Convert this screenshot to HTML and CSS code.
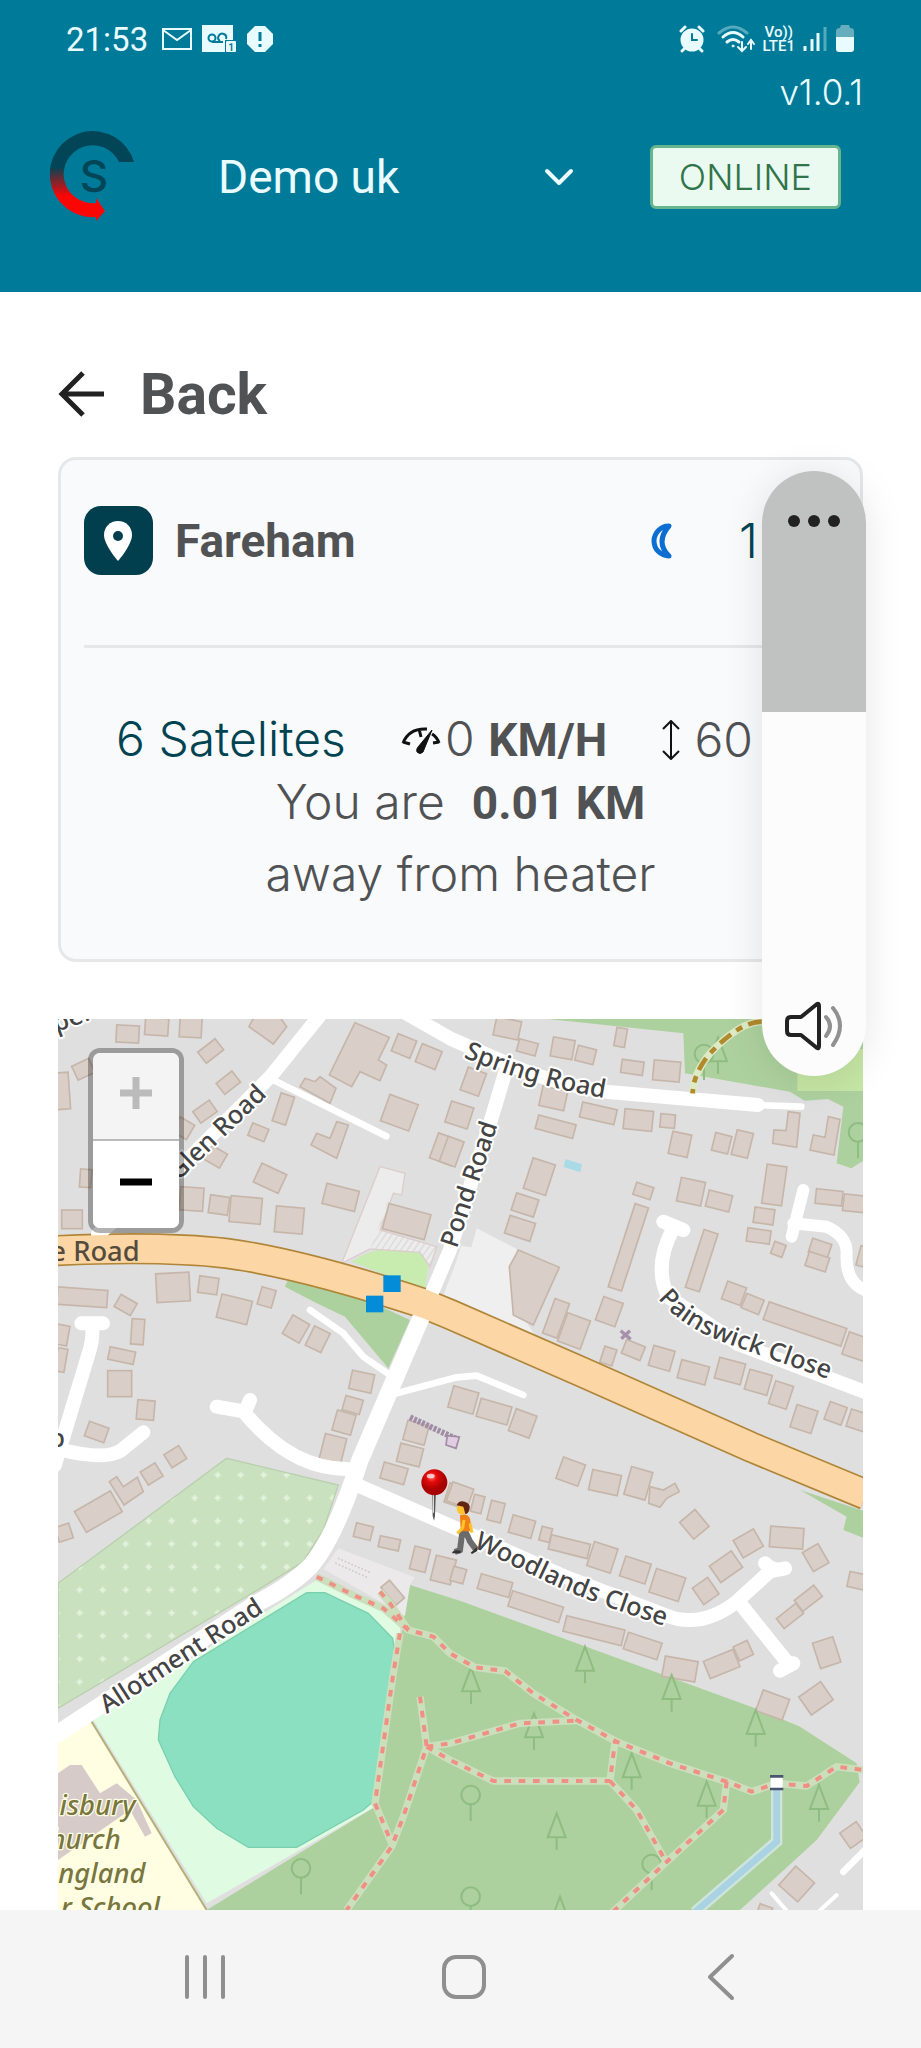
FILE: index.html
```html
<!DOCTYPE html>
<html lang="en">
<head>
    <meta charset="UTF-8">
    <meta name="viewport" content="width=device-width, initial-scale=1.0">
    <title>Heater location</title>
    <link rel="stylesheet" href="styles.css">
</head>
<body>
    <header class="header">
        <div class="status-bar">
            <div class="status-left">
                <span class="clock">21:53</span>
                <svg width="30" height="22" viewBox="0 0 30 22" fill="none" stroke="#e8fbff" stroke-width="2"><rect x="1" y="1" width="28" height="20"/><path d="M1 2l14 10L29 2"/></svg>
                <svg width="34" height="28" viewBox="0 0 34 28">
                    <path d="M0 0h31v15h-8v12H0z" fill="#e8fbff"/>
                    <g fill="none" stroke="#007a99" stroke-width="2"><circle cx="10" cy="13" r="3.5"/><path d="M10 17h11M18 16a4 4 0 1 1 6-2"/></g>
                    <rect x="24" y="16" width="10" height="11" rx="1" fill="#e8fbff"/>
                    <text x="29" y="26" text-anchor="middle" class="badge-text">1</text>
                </svg>
                <svg width="28" height="28" viewBox="0 0 28 28"><path d="M9 1h10l8 8v10l-8 8H9l-8-8V9z" fill="#e8fbff"/><path d="M14 7v9M14 19v3" stroke="#007a99" stroke-width="3"/></svg>
            </div>
            <div class="status-right">
                <svg width="26" height="28" viewBox="0 0 26 28" fill="none" stroke="#e8fbff" stroke-width="3" stroke-linecap="round"><circle cx="13" cy="15" r="10" fill="#e8fbff"/><path d="M2 6l4-4M24 6l-4-4M5 24l-2 2M21 24l2 2"/><path d="M13 9v6h5" stroke="#007a99" stroke-width="2"/></svg>
                <svg class="wifi" width="38" height="28" viewBox="0 0 38 28" fill="none" stroke="#e8fbff" stroke-width="3" stroke-linecap="round"><path d="M2 8q14-12 28 0" stroke="#55aabd"/><path d="M6 12q10-9 20 0M10 17q6-5 12 0"/><circle cx="16" cy="21" r="1" fill="#e8fbff" stroke-width="1"/><path d="M25 17v8m-4-3l4 4 4-4M34 24v-8m-3 3l3-4 3 4" stroke-width="2"/></svg>
                <span class="volte">Vo))<br>LTE1</span>
                <svg width="24" height="28" viewBox="0 0 24 28" stroke="#e8fbff" stroke-width="3"><path d="M2 21v5M9 14v12M15 8v18"/><path d="M22 2v24" stroke="#55aabd"/></svg>
                <svg class="battery" width="20" height="28" viewBox="0 0 20 28"><path d="M1 6q0-3 4-3l1-3h8l1 3q4 0 4 3v7H1z" fill="#66adbd"/><path d="M1 12h18v12q0 3-3 3H4q-3 0-3-3z" fill="#e8fbff"/></svg>
            </div>
        </div>
        <div class="version">v1.0.1</div>
        <div class="toolbar">
            <svg class="logo" width="84" height="92" viewBox="0 0 84 92">
                <defs><linearGradient id="ring" x1="0" y1="0" x2="0" y2="1"><stop offset=".4" stop-color="#014556"/><stop offset=".72" stop-color="#fb0505"/></linearGradient></defs>
                <path d="M84 31H69A29 29 0 1 0 46 72v-5l9 13-9 10v-4A43 43 0 1 1 84 31z" fill="url(#ring)"/>
                <text x="44" y="61" text-anchor="middle" class="logo-text">S</text>
            </svg>
            <div class="device-picker">
                <select class="device-select" aria-label="Device">
                    <option>Demo uk</option>
                </select>
                <svg class="chevron" width="30" height="20" viewBox="0 0 30 20" fill="none" stroke="#eafcff" stroke-width="4" stroke-linecap="round" stroke-linejoin="round"><path d="M3 4l12 12L27 4"/></svg>
            </div>
            <span class="online-badge">ONLINE</span>
        </div>
    </header>

    <main class="content">
        <a class="back-link" href="#">
            <svg width="46" height="46" viewBox="0 0 46 46" fill="none" stroke="#212121" stroke-width="5"><path d="M46 23H4M25 2L4 23l21 21"/></svg>
            Back
        </a>

        <section class="card">
            <div class="card-header">
                <svg class="place-icon" width="69" height="69" viewBox="0 0 69 69"><rect width="69" height="69" rx="17" fill="#013f4e"/><path d="M34 15c-8 0-14 6-14 14 0 10 14 26 14 26s14-16 14-26c0-8-6-14-14-14z" fill="#fff"/><circle cx="34" cy="30" r="5" fill="#013f4e"/></svg>
                <h2 class="place-name">Fareham</h2>
                <svg class="moon" width="32" height="38" viewBox="0 0 32 38" fill="none" stroke="#0d6ed1" stroke-width="5" stroke-linejoin="round"><path d="M28 4A15 15 0 1 0 28 34Q14 20 28 4z"/></svg>
                <span class="teal">1</span>
            </div>
            <div class="stats">
                <span class="teal">6 Satelites</span>
                <span class="speed">
                    <svg width="40" height="28" viewBox="0 0 40 28" fill="none" stroke="#111" stroke-width="3"><path d="M2 17Q8 2 26 3M2 16l7 2M18 3l2 8M31 8q5 3 7 9M38 16l-6 1"/><path d="M31 4L22 26q-3 3-6 0-1-3 1-5z" fill="#111" stroke-width="1"/></svg>
                    <span>0 <b>KM/H</b></span>
                </span>
                <span class="altitude">
                    <svg width="18" height="40" viewBox="0 0 18 40" fill="none" stroke="#111" stroke-width="2"><path d="M9 2v36M1 9l8-8 8 8M1 31l8 8 8-8"/></svg>
                    <span>60</span>
                </span>
            </div>
            <p class="distance">You are &nbsp;<b>0.01 KM</b></p>
            <p class="distance-note">away from heater</p>
        </section>

        <section class="map" aria-label="Map">
            <svg class="map-canvas" viewBox="0 0 2415 2673">
                <defs>
                    <pattern id="plots" x="445" y="1334" width="69" height="69" patternUnits="userSpaceOnUse"><path d="M34 25v18M25 34h18" stroke="#e4f5df" stroke-width="6"/></pattern>
                    <pattern id="bays" width="16" height="16" patternUnits="userSpaceOnUse" patternTransform="rotate(-55)"><path d="M0 8h16" stroke="#d6d1d0" stroke-width="3"/></pattern>
                    <radialGradient id="pinHead" cx=".4" cy=".3"><stop offset="0" stop-color="#ff6a6a"/><stop offset=".4" stop-color="#e30b0b"/><stop offset="1" stop-color="#a80000"/></radialGradient>
                    <g id="conifer" class="tree"><path d="M0 0l-27 72h54zM0 72v38"/></g>
                    <g id="broadleaf" class="tree"><circle r="28"/><path d="M0 28v50"/></g>
                    <path id="lineGlen" d="M361 487L690 170"/>
                    <path id="linePond" d="M1196 690L1335 270"/>
                    <path id="lineSpring" d="M1216 115Q1420 205 1690 245"/>
                    <path id="linePainswick" d="M1800 838Q1870 925 2010 975L2400 1112"/>
                    <path id="lineWoodlands" d="M1246 1584L1500 1705Q1640 1765 1880 1840"/>
                    <path id="lineAllotment" d="M146 2085L660 1752"/>
                </defs>

                <rect width="2415" height="2673" fill="#dfdfdf"/>

                <!-- land use -->
                <g class="wood">
                    <path d="M1470 0L1876 43 1881 163 2196 218 2240 245 2310 240 2356 263 2336 433 2380 448 2424 420V0z"/>
                    <path d="M681 803L691 781 796 795 926 843 1056 903 991 1048 861 893 776 853z"/>
                    <path d="M1056 1698L1206 1745 2106 2073 2226 2123 2396 2233 2405 2290 2276 2463 2046 2673H446L951 2363 1040 1780z"/>
                    <path d="M2226 1413L2366 1493 2356 1533 2424 1560V1478z"/>
                </g>
                <rect x="2218" y="90" width="200" height="126" fill="#c5e6a4"/>
                <path d="M881 728Q940 688 1016 688 1100 690 1111 743L1101 813z" fill="#c8ebb0"/>
                <path d="M0 1693L506 1318 841 1398 796 1533 736 1628 616 1703 0 2068z" fill="#c9e1bf"/>
                <path d="M0 1693L506 1318 841 1398 796 1533 736 1628 616 1703 0 2068z" fill="url(#plots)" stroke="#b9cfae" stroke-width="4"/>
                <path d="M106 2103L776 1683 1026 1793V1863L951 2363 446 2653z" fill="#dffce2"/>
                <path d="M746 1721H801L931 1783 1004 1858 1011 1903 951 2343 916 2373 716 2485H571L476 2428 406 2363 351 2273 301 2163 306 2103 336 2023 406 1928z" fill="#8ae0c0" stroke="#7acfae" stroke-width="4"/>
                <path d="M0 2163L101 2108 446 2673H0z" fill="#fffee2"/>
                <path d="M101 2108L446 2673" stroke="#b4b07a" stroke-width="6"/>
                <path d="M0 2263L36 2238H71L126 2323 176 2293 236 2343 281 2443 261 2453 216 2373 0 2523z" fill="#d6cbc8"/>
                <path d="M1256 628L1376 690 1366 853 1431 948 1150 845 1190 740 1210 680 1240 685z" fill="#efefef"/>
                <path d="M841 1588L1070 1675 1056 1698 1041 1790 796 1650z" fill="#ebe9e9"/>
                <path d="M840 1618L940 1662M832 1632L930 1676" stroke="#cfcaca" stroke-width="5" stroke-dasharray="5 6"/>
                <path d="M966 443L1041 463 1031 528 1006 523 966 633 1136 683 1116 743 1086 700 936 690 851 733z" fill="#ececec" stroke="#dccdcd" stroke-width="4"/>
                <path d="M1006 503L966 633 1136 683 1116 743 1086 700 936 690z" fill="url(#bays)"/>
                <path d="M1522 420l50 16-5 24-50-16z" fill="#a9dbe6"/>

                <g id="buildings" class="buildings"></g>

                <path class="main-casing" d="M-5 695Q306 680 506 703 730 733 1096 853L1176 886 1576 1061 2076 1283 2424 1427"/>

                <!-- residential roads -->
                <g class="road">
                    <path d="M785 -10L640 170 361 450 120 645"/>
                    <path class="narrow" d="M640 180L985 352"/>
                    <path d="M1030 -25L1180 60 1340 130Q1480 195 1660 220L2100 258"/>
                    <path class="narrow" d="M2090 258L2230 263"/>
                    <path d="M1341 163L1296 313 1176 693 1121 823"/>
                    <path d="M1096 880L906 1323Q830 1560 756 1643 700 1700 596 1753L0 2143" stroke-width="52"/>
                    <path d="M70 913H135M100 913Q110 950 90 1010L-10 1340"/>
                    <path d="M0 1290Q160 1330 200 1285L256 1240"/>
                    <path d="M476 1163L561 1178 576 1143M561 1183Q700 1350 866 1350"/>
                    <path class="narrow" d="M756 873L856 943 916 1013 996 1068"/>
                    <path class="narrow" d="M1016 1123L1196 1075 1256 1070 1396 1128"/>
                    <path d="M886 1393L1176 1520 1526 1675 1826 1790Q1930 1830 2036 1748L2146 1648M2121 1633L2146 1655 2181 1648M2046 1753L2186 1928M2206 1933L2166 1955"/>
                    <path d="M1816 608L1876 633M1846 628Q1785 740 1830 833L2040 975 2424 1120"/>
                    <path d="M2236 513L2201 653M2206 613L2306 623Q2366 650 2366 700 2360 790 2424 815" stroke-width="36"/>
                    <path class="narrow" d="M2356 2558L2424 2490"/>
                    <path class="service" d="M2141 2623L2190 2680M2336 2628L2280 2680"/>
                </g>

                <path class="main-road" d="M-5 695Q306 680 506 703 730 733 1096 853L1176 886 1576 1061 2076 1283 2424 1427"/>
                <g fill="#058cd8"><rect x="976" y="769" width="52" height="50"/><rect x="924" y="830" width="52" height="50"/></g>
                <path d="M1056 1195L1200 1262" stroke="#a08ca5" stroke-width="18" stroke-dasharray="9 4"/>
                <path d="M1168 1250l36 4-10 34-30-10z" fill="#e2cce4" stroke="#a08ca5" stroke-width="5"/>
                <path d="M1688 935l30 26M1716 935l-26 24" stroke="#a690ac" stroke-width="10"/>

                <!-- trees -->
                <use href="#conifer" x="1581" y="1883"/>
                <use href="#conifer" x="1239" y="1945"/>
                <use href="#conifer" x="1841" y="1968"/>
                <use href="#conifer" x="2093" y="2073"/>
                <use href="#conifer" x="1428" y="2083"/>
                <use href="#conifer" x="1721" y="2203"/>
                <use href="#conifer" x="1946" y="2288"/>
                <use href="#conifer" x="2283" y="2298"/>
                <use href="#conifer" x="1496" y="2383"/>
                <use href="#conifer" x="1506" y="2633"/>
                <use href="#conifer" x="1980" y="55"/>
                <use href="#broadleaf" x="1238" y="2328"/>
                <use href="#broadleaf" x="1781" y="2535"/>
                <use href="#broadleaf" x="1238" y="2633"/>
                <use href="#broadleaf" x="729" y="2548"/>
                <use href="#broadleaf" x="1938" y="105"/>
                <use href="#broadleaf" x="2400" y="340"/>

                <!-- water and footpaths -->
                <path d="M2156 2303V2468L1910 2680" fill="none" stroke="#cfe5dc" stroke-width="34"/>
                <path d="M2156 2303V2468L1910 2680" fill="none" stroke="#a9d2e2" stroke-width="20"/>
                <g id="paths" class="footpaths-base"></g>
                <g class="footpaths">
                    <path d="M776 1673L886 1728 976 1768 1051 1833 1126 1853 1176 1903 1251 1945 1341 1956 1426 2023 1556 2103 1676 2168 1836 2233 2006 2288 2081 2318 2156 2293 2246 2301 2336 2243 2418 2253"/>
                    <path d="M966 1718L996 1753 1051 1833"/>
                    <path d="M1026 1843L1006 1963 951 2353 1001 2473"/>
                    <path d="M1086 2033L1106 2183 1036 2393 1001 2483 866 2673"/>
                    <path d="M1106 2183L1176 2173 1386 2113 1556 2105"/>
                    <path d="M1106 2183L1176 2223 1306 2286H1656L1671 2168"/>
                    <path d="M1656 2286L1736 2373 1821 2523"/>
                    <path d="M2006 2288L1996 2373 1821 2533 1660 2683"/>
                </g>
                <path d="M2111 8Q2046 8 1956 103 1906 163 1904 223" fill="none" stroke="#dcebc5" stroke-width="22"/>
                <path d="M2111 8Q2046 8 1956 103 1906 163 1904 223" fill="none" stroke="#b08a2c" stroke-width="14" stroke-dasharray="42 20 20 20"/>
                <path d="M2138 2272h36v36h-36z" fill="#fff"/><path d="M2136 2272h40M2136 2310h40" stroke="#4b5570" stroke-width="8"/>

                <!-- labels -->
                <g class="labels">
                    <text><textPath href="#lineGlen">Glen Road</textPath></text>
                    <text><textPath href="#linePond">Pond Road</textPath></text>
                    <text><textPath href="#lineSpring">Spring Road</textPath></text>
                    <text><textPath href="#linePainswick">Painswick Close</textPath></text>
                    <text><textPath href="#lineWoodlands">Woodlands Close</textPath></text>
                    <text><textPath href="#lineAllotment">Allotment Road</textPath></text>
                    <text x="-5" y="40" transform="rotate(-20 -5 40)">per</text>
                    <text x="-26" y="1285">p</text>
                </g>
                <text class="main-label" x="-23" y="725">e Road</text>
                <g class="school-label">
                    <text x="232" y="2388">isbury</text>
                    <text x="188" y="2490">hurch</text>
                    <text x="262" y="2593">ngland</text>
                    <text x="306" y="2695">r School</text>
                </g>

                <!-- heater pin -->
                <g transform="translate(1128 1351)">
                    <path d="M-7 30h14L3 140 0 154-4 140z" fill="#555"/><path d="M-2 30v100" stroke="#ddd" stroke-width="4"/>
                    <circle cx="1" cy="39" r="39" fill="url(#pinHead)"/>
                    <ellipse cx="-10" cy="20" rx="12" ry="7" fill="#fff" opacity=".7"/>
                </g>
                <!-- walking user -->
                <g transform="translate(1176 1443)">
                    <path d="M38 88L30 150 14 156M44 90L60 124 78 148" fill="none" stroke="#6b6b6b" stroke-width="18"/>
                    <path d="M6 160q2-12 26-8v8zM62 158l18-16q6 6 0 12l-14 8z" fill="#333"/>
                    <path d="M30 46q22-8 30 10l6 38H32z" fill="#f08013"/>
                    <path d="M42 60L38 84 22 100M60 70l6 28" fill="none" stroke="#ffc231" stroke-width="9"/>
                    <path d="M24 16h26v24q-16 8-26-2l-4-12z" fill="#ffc231"/>
                    <path d="M20 16Q26 0 44 5 64 10 58 30 54 42 46 42L40 20z" fill="#612411"/>
                </g>
            </svg>
            <div class="zoom-control">
                <button class="zoom-btn" type="button" aria-label="Zoom in" disabled><svg width="32" height="32" viewBox="0 0 32 32"><path d="M0 16h32M16 0v32" stroke="#bbb" stroke-width="7"/></svg></button>
                <button class="zoom-btn" type="button" aria-label="Zoom out"><svg width="32" height="32" viewBox="0 0 32 32"><path d="M0 16h32" stroke="#000" stroke-width="7"/></svg></button>
            </div>
        </section>
    </main>

    <aside class="volume" aria-label="Volume">
        <button class="volume-level" type="button" aria-label="Volume options"><svg width="52" height="12" viewBox="0 0 52 12" fill="#222"><circle cx="6" cy="6" r="6"/><circle cx="26" cy="6" r="6"/><circle cx="46" cy="6" r="6"/></svg></button>
        <svg class="speaker" width="60" height="50" viewBox="0 0 60 50" fill="none" stroke="#222" stroke-width="4" stroke-linejoin="round" stroke-linecap="round"><path d="M3 20q0-4 4-4h10L33 3q2-1 2 2v40q0 3-2 2L17 34H7q-4 0-4-4z"/><path d="M42 16q8 9 0 19M49 7q14 17 0 37" stroke="#919191"/></svg>
    </aside>

    <nav class="nav-bar">
        <button class="nav-btn" type="button" aria-label="Recent apps"><svg width="46" height="48" viewBox="0 0 46 48"><path d="M5 4v40M23 4v40M41 4v40"/></svg></button>
        <button class="nav-btn" type="button" aria-label="Home"><svg width="46" height="48" viewBox="0 0 46 48"><rect x="3" y="4" width="40" height="40" rx="12"/></svg></button>
        <button class="nav-btn" type="button" aria-label="Back"><svg width="46" height="48" viewBox="0 0 46 48"><path d="M33 3L11 24l22 21"/></svg></button>
    </nav>
    <script src="map.js"></script>
</body>
</html>
```
FILE: map.js
```js
// each tile: offset, boxes as [centre x, centre y, width, height, angle], and odd shapes as point lists
const tiles = [
    {
        x: -24, y: -27,
        boxes: [
            [233,72,68,52,3],[320,50,70,52,4],[422,52,66,60,3],[482,123,66,42,-38],[535,218,60,42,-38],[100,178,56,46,-25],
            [38,243,40,110,-4],[465,305,60,42,-35],[625,367,52,40,22],[400,355,50,50,30],[497,440,54,48,30],[660,505,82,62,25],
            [700,297,42,88,18],[872,562,100,62,14],[425,567,70,70,4],[507,585,58,54,8],[587,600,94,78,5],[718,630,84,78,5],
            [107,505,34,54,4],[66,628,62,56,0],[1062,108,60,56,22],[1136,140,64,58,22],[1048,308,90,84,20],[1185,418,70,80,20],
            [1070,635,130,78,15],[97,862,150,52,4],[369,832,100,86,-3],[475,826,58,50,8],[553,898,94,72,14],[650,862,44,54,16],
            [227,885,56,42,30],[263,965,38,76,4],[215,1037,78,38,12],[209,1121,72,78,0],[287,1200,52,58,5],[140,1266,62,46,20],
            [738,957,58,64,30],[803,988,52,64,26],[935,1115,68,56,12],[908,1185,54,44,16],[882,1238,58,62,16],[848,1320,66,86,14],
            [1098,1268,66,60,15],[35,975,40,60,10],[33,1050,30,70,10]
        ],
        shapes: [
            '915,38 1018,82 985,150 1010,165 990,212 930,185 905,230 838,195',
            '765,205 795,215 810,200 858,235 840,280 750,230',
            '860,335 895,345 860,445 783,405 800,370 840,385',
            '615,15 685,15 710,50 670,102 597,50'
        ]
    },
    {
        x: 1176, y: -27,
        boxes: [
            [172,55,76,56,12],[232,112,58,38,15],[338,115,66,58,10],[407,135,56,46,14],[512,82,32,56,10],[547,172,66,40,8],
            [650,183,80,60,5],[70,215,58,72,20],[28,315,70,66,18],[310,265,76,60,12],[317,350,116,42,15],[445,310,106,46,13],
            [565,330,86,60,6],[653,333,44,40,5],[690,403,58,68,12],[815,400,50,54,14],[877,402,50,76,14],[5,425,50,80,20],
            [268,500,70,96,18],[225,585,70,54,18],[210,655,80,56,18],[580,543,54,38,18],[535,712,42,262,18],[723,545,74,72,12],
            [807,573,72,50,14],[973,525,60,118,8],[942,618,60,46,8],[926,678,70,40,8],[985,718,36,38,20],[1137,562,80,44,6],
            [1215,580,70,50,6],[755,752,44,182,18],[1110,715,60,44,18],[1102,755,64,44,18],[852,850,60,56,20],[908,882,56,46,22],
            [1065,942,246,56,19],[1220,1010,70,70,19],[318,925,46,110,20],[372,963,72,90,20],[478,905,62,74,20],[550,1020,60,44,22],
            [475,1038,38,50,18],[635,1045,66,62,16],[730,1087,86,56,15],[840,1083,80,64,15],[925,1117,70,62,16],[993,1155,56,72,18],
            [1062,1227,66,70,18],[1157,1210,54,56,20],[1225,1232,60,54,18],[40,1170,78,66,16],[132,1205,96,56,16],[218,1240,66,70,20],
            [362,1385,70,68,20],[465,1418,88,62,12],[565,1420,66,86,16],[1240,740,30,60,15]
        ],
        shapes: [
            '205,720 328,772 250,945 190,915 178,770',
            '1015,305 1050,310 1040,412 968,400 972,360 1008,362',
            '1135,320 1170,328 1152,435 1080,420 1090,375 1125,382',
            '600,1430 640,1440 675,1420 688,1445 650,1465 630,1492 596,1480'
        ]
    },
    {
        x: -24, y: 1263,
        boxes: [
            [376,50,52,46,-32],[305,102,52,46,-32],[145,215,124,72,-30],[42,278,44,46,-18],[1080,45,70,56,14],[1032,100,74,50,16],
            [940,275,52,42,14],[1018,310,62,34,12],[1110,358,48,70,14],[1180,390,62,76,14],[1028,458,70,34,50],[1215,165,50,60,18]
        ],
        shapes: ['178,125 200,110 220,140 262,112 280,155 222,195']
    },
    {
        x: 1176, y: 1383,
        boxes: [
            [30,45,66,60,20],[83,72,32,52,14],[138,95,42,60,14],[216,140,70,54,16],[287,163,32,42,14],[358,200,120,44,14],
            [457,232,74,76,18],[556,270,80,62,18],[652,315,92,74,18],[733,133,60,66,-40],[767,333,56,60,-35],[828,260,80,60,-35],
            [895,190,70,60,-30],[1010,173,100,62,4],[1097,233,54,66,-30],[1220,302,50,46,12],[1020,408,74,38,-38],[1075,355,74,42,-38],
            [1130,518,64,80,-18],[968,675,84,66,20],[1098,655,80,66,-35],[690,567,100,62,10],[815,552,96,56,-22],[880,512,46,46,-25],
            [25,285,40,44,16],[135,317,98,46,16],[257,380,160,48,18],[432,452,180,48,14],[578,498,106,52,18],[1040,1212,76,76,42],
            [1210,1065,60,56,-35],[945,1290,40,26,20]
        ],
        shapes: []
    }
];

const layer = document.getElementById('buildings');

layer.innerHTML = tiles.map(tile => {
    const boxes = tile.boxes.map(([cx, cy, w, h, angle]) =>
        `<rect x="${cx - w / 2}" y="${cy - h / 2}" width="${w}" height="${h}" transform="rotate(${angle} ${cx} ${cy})"/>`);
    const shapes = tile.shapes.map(points => `<polygon points="${points}"/>`);
    return `<g transform="translate(${tile.x} ${tile.y})">${boxes.join('')}${shapes.join('')}</g>`;
}).join('');

// pale band under the dashed footpaths
document.getElementById('paths').innerHTML = document.querySelector('.footpaths').innerHTML;
```
FILE: styles.css
```css
* {
    box-sizing: border-box;
}
body {
    margin: 0;
    min-height: 100vh;
    display: flex;
    flex-direction: column;
    position: relative;
    background: #fff;
    color: #505254;
    font-family: Inter, "Open Sans", sans-serif;
    font-weight: 300;
}
svg {
    display: block;
    flex-shrink: 0;
}
button {
    border: none;
    padding: 0;
    display: flex;
    align-items: center;
    justify-content: center;
}

/* header */
.header {
    background: #007a99;
    color: #eafcff;
    padding: 16px 0 60px;
}
.status-bar {
    display: flex;
    justify-content: space-between;
    align-items: center;
    height: 46px;
    padding: 0 66px;
}
.status-left,
.status-right {
    display: flex;
    align-items: center;
    gap: 10px;
}
.status-right {
    gap: 8px;
}
.clock {
    margin-right: 4px;
    font-family: Roboto, sans-serif;
    font-weight: 400;
    font-size: 33px;
}
.badge-text {
    font: 700 10px Roboto, sans-serif;
    fill: #007a99;
}
.wifi {
    margin-left: 4px;
}
.volte {
    font: 500 15px/14px Roboto, sans-serif;
    text-align: center;
}
.version {
    padding: 0 58px;
    text-align: right;
    font-size: 35px;
    line-height: 60px;
}
.toolbar {
    display: flex;
    align-items: center;
    padding: 0 80px 0 50px;
    height: 110px;
}
.logo-text {
    font: 500 44px Inter, sans-serif;
    fill: #014556;
}
.device-picker {
    display: grid;
    align-items: center;
    flex: 1;
    margin: 0 76px 0 84px;
}
.device-select,
.chevron {
    grid-area: 1 / 1;
}
.device-select {
    appearance: none;
    width: 100%;
    padding: 0;
    border: none;
    background: none;
    color: #eafcff;
    font: 400 46px/60px Roboto, sans-serif;
}
.chevron {
    justify-self: end;
    pointer-events: none;
}
.online-badge {
    padding: 0 26px;
    border: 3px solid #67b48e;
    border-radius: 6px;
    background: #eafaf1;
    color: #317449;
    font-size: 36px;
    line-height: 58px;
}

/* card */
.content {
    padding: 68px 58px 0;
}
.back-link {
    display: flex;
    align-items: center;
    gap: 36px;
    height: 68px;
    margin-bottom: 29px;
    color: #505254;
    font: 700 57px Roboto, sans-serif;
    text-decoration: none;
}
.card {
    padding: 0 23px 54px;
    border: 3px solid #e5e7e9;
    border-radius: 18px;
    background: #f9fafc;
    font-size: 48px;
    line-height: 62px;
}
.card b {
    font-family: Roboto, sans-serif;
    font-size: 46px;
    font-weight: 700;
}
.card p {
    margin: 0;
    text-align: center;
}
.card-header {
    display: flex;
    align-items: center;
    height: 188px;
    padding-bottom: 24px;
    border-bottom: 3px solid #e5e7e9;
}
.place-name {
    flex: 1;
    margin: 0 0 0 22px;
    font: 700 46px Roboto, sans-serif;
}
.moon {
    margin-right: 66px;
}
.card-header .teal {
    width: 98px;
}
.teal {
    color: #014451;
}
.stats {
    display: flex;
    justify-content: space-between;
    padding: 60px 84px 0 32px;
    white-space: nowrap;
}
.speed,
.altitude {
    display: flex;
    align-items: center;
    gap: 4px;
}
.altitude {
    gap: 14px;
}
.distance-note {
    padding-top: 9px;
}

/* map */
.map {
    position: relative;
    margin-top: 57px;
    overflow: hidden;
}
.map-canvas {
    width: 100%;
}
.wood {
    fill: #add19e;
}
.buildings {
    fill: #d9cfc8;
    stroke: #c6b6aa;
    stroke-width: 5;
}
.road {
    fill: none;
    stroke: #fff;
    stroke-width: 42;
    stroke-linecap: round;
    stroke-linejoin: round;
}
.narrow {
    stroke-width: 20;
}
.service {
    stroke-width: 12;
}
.main-casing,
.main-road {
    fill: none;
    stroke: #b08538;
    stroke-width: 94;
}
.main-road {
    stroke: #fcd6a4;
    stroke-width: 84;
}
.tree {
    fill: none;
    stroke: #8ebc81;
    stroke-width: 6;
}
.footpaths-base,
.footpaths {
    fill: none;
    stroke: #cbdfbc;
    stroke-width: 22;
    stroke-linejoin: round;
}
.footpaths {
    stroke: #f08f84;
    stroke-width: 12;
    stroke-dasharray: 20 23;
}
.labels,
.main-label,
.school-label {
    font: 500 76px "Noto Sans", sans-serif;
    fill: #444;
    stroke: #fff;
    stroke-width: 12;
    stroke-linejoin: round;
    paint-order: stroke;
}
.main-label {
    font-size: 82px;
    fill: #554b3c;
    stroke: none;
}
.school-label {
    font-size: 82px;
    font-style: italic;
    fill: #78763f;
    stroke: #fffee2;
    stroke-width: 8;
    text-anchor: end;
}
.zoom-control {
    position: absolute;
    top: 29px;
    left: 30px;
    border: 5px solid rgba(0, 0, 0, 0.3);
    border-radius: 12px;
    background-clip: padding-box;
    overflow: hidden;
}
.zoom-btn {
    width: 86px;
    height: 87px;
    padding-bottom: 6px;
    background: #fff;
}
.zoom-btn:disabled {
    height: 88px;
    border-bottom: 2px solid #bbb;
    background: #f4f4f4;
}

/* volume slider over the page */
.volume {
    position: absolute;
    top: 471px;
    right: 55px;
    width: 104px;
    height: 605px;
    display: flex;
    flex-direction: column;
    justify-content: space-between;
    align-items: center;
    padding-bottom: 25px;
    border-radius: 52px;
    background: #fcfcfc;
    box-shadow: 0 4px 40px rgba(0, 0, 0, 0.1);
    overflow: hidden;
}
.volume-level {
    width: 100%;
    height: 241px;
    padding-top: 44px;
    align-items: flex-start;
    background: #c0c1c1;
}

/* android navigation */
.nav-bar {
    display: flex;
    flex: 1;
    align-items: center;
    justify-content: space-between;
    min-height: 138px;
    padding: 0 176px 4px 182px;
    background: #f5f5f5;
}
.nav-btn {
    background: none;
}
.nav-btn svg {
    fill: none;
    stroke: #8f8f8f;
    stroke-width: 4;
    stroke-linecap: round;
    stroke-linejoin: round;
}
```
